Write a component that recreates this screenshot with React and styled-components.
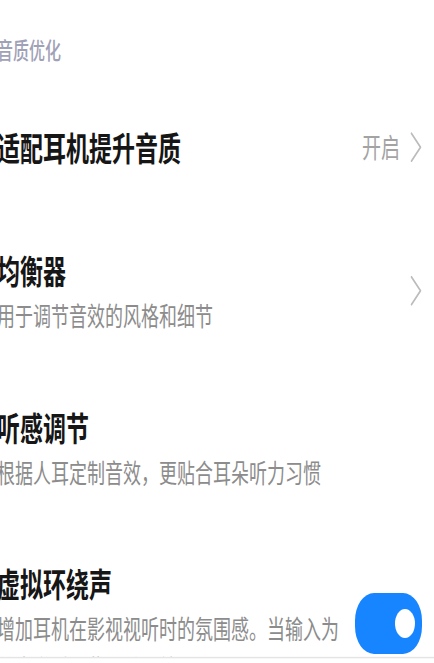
import styled, { createGlobalStyle } from 'styled-components'

const GlobalStyle = createGlobalStyle`
  html {
    overflow: hidden;
  }
  html, body {
    margin: 0;
    padding: 0;
    height: 100%;
    background: #ffffff;
  }
  body {
    font-family: "Noto Sans CJK SC", "Noto Sans", sans-serif;
  }
`

// the screenshot is a phone screen squeezed sideways, so the whole page is stretched vertically
const Screen = styled.div`
  width: 434px;
  height: 454px;
  overflow: hidden;
  transform: scale(1, 1.45);
  transform-origin: top left;
  border-bottom: 1px solid #e4e4e6;
  box-sizing: border-box;
`

const List = styled.div`
  display: flex;
  flex-direction: column;
  margin-left: -3px;
  padding-right: 12px;
`

const SectionHeader = styled.div`
  padding-top: 22px;
  margin-bottom: 10px;
  font-size: 16px;
  line-height: 24px;
  font-weight: 500;
  color: #9fa1b7;
`

const Row = styled.div`
  display: flex;
  align-items: center;
  justify-content: space-between;
  gap: 14px;
  min-height: 90px;
  padding: 23.5px 0;
  box-sizing: border-box;
`

const TextBlock = styled.div`
  display: flex;
  flex-direction: column;
  gap: 2px;
  flex: 1;
  min-width: 0;
`

const Title = styled.div`
  font-size: 23px;
  line-height: 32px;
  font-weight: 600;
  color: #161616;
`

const Subtitle = styled.div`
  font-size: 18px;
  line-height: 27px;
  color: #8c8c8c;
  max-width: 345px;
`

const Trail = styled.div`
  display: flex;
  align-items: center;
  gap: 10px;
  flex-shrink: 0;
`

const Value = styled.span`
  font-size: 19px;
  line-height: 26px;
  color: #a3a3a3;
`

const Toggle = styled.div`
  width: 67px;
  height: 42px;
  border-radius: 19px;
  background: ${p => (p.$on ? '#1785ff' : '#d9d9d9')};
  display: flex;
  align-items: center;
  justify-content: ${p => (p.$on ? 'flex-end' : 'flex-start')};
  padding: 0 7px;
  box-sizing: border-box;
  flex-shrink: 0;
`

const Knob = styled.div`
  width: 20px;
  height: 20px;
  border-radius: 50%;
  background: #ffffff;
`

const Chevron = () => (
  <svg width="12" height="21" viewBox="0 0 12 21" fill="none">
    <path d="M1.5 1 L10.5 10.5 L1.5 20" stroke="#bcbcbc" strokeWidth="1.5" strokeLinecap="round" strokeLinejoin="round" />
  </svg>
)

export default function App() {
  return (
    <>
      <GlobalStyle />
      <Screen>
        <List>
          <SectionHeader>音质优化</SectionHeader>

          <Row>
            <TextBlock>
              <Title>适配耳机提升音质</Title>
            </TextBlock>
            <Trail>
              <Value>开启</Value>
              <Chevron />
            </Trail>
          </Row>

          <Row>
            <TextBlock>
              <Title>均衡器</Title>
              <Subtitle>用于调节音效的风格和细节</Subtitle>
            </TextBlock>
            <Trail>
              <Chevron />
            </Trail>
          </Row>

          <Row>
            <TextBlock>
              <Title>听感调节</Title>
              <Subtitle>根据人耳定制音效，更贴合耳朵听力习惯</Subtitle>
            </TextBlock>
          </Row>

          <Row>
            <TextBlock>
              <Title>虚拟环绕声</Title>
              <Subtitle>增加耳机在影视视听时的氛围感。当输入为单声道时，此开关无效</Subtitle>
            </TextBlock>
            <Toggle $on>
              <Knob />
            </Toggle>
          </Row>
        </List>
      </Screen>
    </>
  )
}
